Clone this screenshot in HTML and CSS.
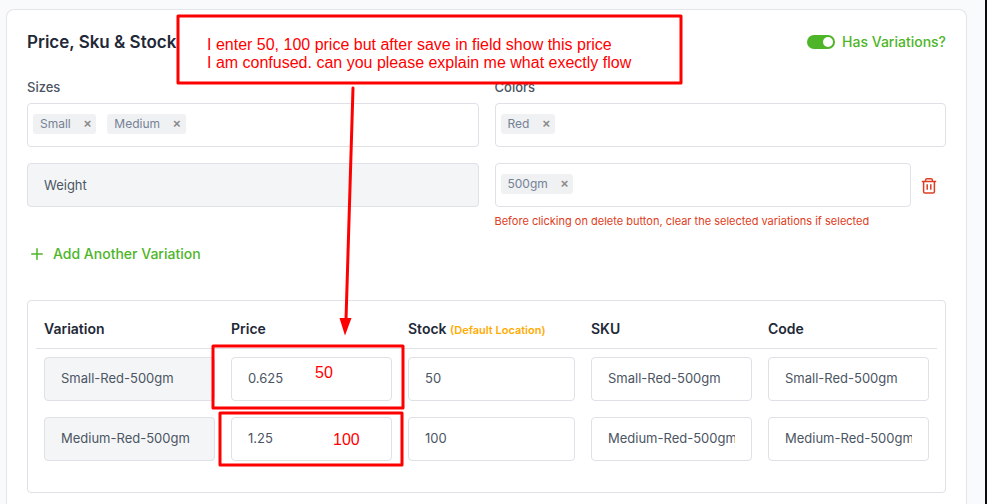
FILE: index.html
```html
<!DOCTYPE html>
<html lang="en">
<head>
    <meta charset="UTF-8">
    <meta name="viewport" content="width=device-width, initial-scale=1.0">
    <title>Price, Sku &amp; Stock</title>
    <link rel="stylesheet" href="styles.css">
</head>
<body>
    <div class="page">
        <main class="card">
            <div class="card-header">
                <h1>Price, Sku &amp; Stock</h1>
                <label class="switch"><input type="checkbox" checked>Has Variations?</label>
            </div>

            <div class="options">
                <div class="field">
                    <label for="sizes">Sizes</label>
                    <div class="tags">
                        <span class="tag">Small<button type="button" aria-label="Remove Small">×</button></span>
                        <span class="tag">Medium<button type="button" aria-label="Remove Medium">×</button></span>
                        <input type="text" id="sizes">
                    </div>
                </div>
                <div class="field">
                    <label for="colors">Colors</label>
                    <div class="tags">
                        <span class="tag">Red<button type="button" aria-label="Remove Red">×</button></span>
                        <input type="text" id="colors">
                    </div>
                </div>
                <div class="field">
                    <input type="text" class="control" value="Weight" aria-label="Variation name" readonly>
                </div>
                <div class="field">
                    <div class="with-delete">
                        <div class="tags">
                            <span class="tag">500gm<button type="button" aria-label="Remove 500gm">×</button></span>
                            <input type="text" aria-label="Weight values">
                        </div>
                        <button type="button" class="delete" aria-label="Delete variation">
                            <svg width="16" height="17" viewBox="0 0 16 17" fill="none" stroke="currentColor">
                                <path d="M.8 4.5h14.400" stroke-width="1.5"/>
                                <path d="M4.500 4.200V3.500Q4.500 1.800 6.200 1.800h3.600q1.700 0 1.700 1.700v.7" stroke-width="1.4"/>
                                <path d="M2.600 4.500v10.200q0 1.400 1.400 1.400h8q1.400 0 1.400-1.400V4.500" stroke-width="1.5"/>
                                <path d="M6.200 7.300v5.400M9.800 7.300v5.400" stroke-width="1.5"/>
                            </svg>
                        </button>
                    </div>
                    <p class="warning">Before clicking on delete button, clear the selected variations if selected</p>
                </div>
            </div>

            <button type="button" class="add">
                <svg width="12" height="13" viewBox="0 0 12 13" stroke="currentColor" stroke-width="1.5" stroke-linecap="round">
                    <path d="M6 1.700v10.600M.7 7h10.600"/>
                </svg>
                Add Another Variation
            </button>

            <div class="panel">
                <table>
                    <colgroup>
                        <col class="col-variation">
                        <col class="col-price">
                        <col class="col-stock">
                        <col class="col-sku">
                        <col class="col-code">
                    </colgroup>
                    <thead>
                        <tr>
                            <th>Variation</th>
                            <th>Price</th>
                            <th>Stock <small>(Default Location)</small></th>
                            <th>SKU</th>
                            <th>Code</th>
                        </tr>
                    </thead>
                    <tbody>
                        <tr>
                            <td><input type="text" class="control" value="Small-Red-500gm" aria-label="Variation" readonly></td>
                            <td><input type="text" class="control" value="0.625" aria-label="Price"></td>
                            <td><input type="text" class="control" value="50" aria-label="Stock"></td>
                            <td><input type="text" class="control" value="Small-Red-500gm" aria-label="SKU"></td>
                            <td><input type="text" class="control" value="Small-Red-500gm" aria-label="Code"></td>
                        </tr>
                        <tr>
                            <td><input type="text" class="control" value="Medium-Red-500gm" aria-label="Variation" readonly></td>
                            <td><input type="text" class="control" value="1.25" aria-label="Price"></td>
                            <td><input type="text" class="control" value="100" aria-label="Stock"></td>
                            <td><input type="text" class="control" value="Medium-Red-500gm" aria-label="SKU"></td>
                            <td><input type="text" class="control" value="Medium-Red-500gm" aria-label="Code"></td>
                        </tr>
                    </tbody>
                </table>
            </div>
        </main>

        <!-- red markup drawn over the form -->
        <div class="notes">
            <svg class="marks" width="700" height="480" viewBox="0 0 700 480" fill="none" stroke="#f00" stroke-width="3" stroke-linejoin="round">
                <rect x="178" y="16" width="503" height="67" fill="#fff"/>
                <rect x="213" y="346" width="190" height="62"/>
                <rect x="220" y="413" width="182" height="52"/>
                <path d="M353 88 346 320" stroke-linecap="round"/>
                <path d="M339.5 318h12L345 335.500z" fill="#f00" stroke="none"/>
            </svg>
            <p class="note note-question">I enter 50, 100 price but after save in field show this price<br>I am confused. can you please explain me what exectly flow</p>
            <p class="note note-first">50</p>
            <p class="note note-second">100</p>
        </div>
    </div>
</body>
</html>
```
FILE: styles.css
```css
*{
    margin: 0;
    padding: 0;
    box-sizing: border-box;
}
body{
    font-family: Inter, "Liberation Sans", sans-serif;
    font-size: 13px;
    color: #4b5563;
    background-color: #f9fafc;
}
button, input{
    font: inherit;
    color: inherit;
    border: none;
    background: none;
}
button{
    cursor: pointer;
}
.page{
    position: relative;
    display: flex;
    min-height: 100vh;
    padding: 9px 18px 0 6px;
    border-right: 2px solid #0b0c0e;
}
.card{
    flex: 1;
    padding: 20px 20px 10px;
    background-color: #fff;
    border: 1px solid #e3e5e8;
    border-bottom: none;
    border-radius: 8px 8px 0 0;
}
.card-header{
    display: flex;
    justify-content: space-between;
    align-items: center;
    height: 23px;
    margin-bottom: 25px;
}
.card-header h1{
    font-size: 17px;
    font-weight: 600;
    color: #1f2937;
}
.switch{
    display: flex;
    align-items: center;
    gap: 7px;
    font-size: 14px;
    font-weight: 500;
    color: #4eb529;
}
.switch input{
    appearance: none;
    width: 28px;
    height: 14px;
    padding: 2px;
    border-radius: 7px;
    background-color: #4eb529;
}
.switch input::before{
    content: "";
    display: block;
    width: 10px;
    height: 10px;
    border-radius: 50%;
    background-color: #fff;
}
.switch input:checked::before{
    margin-left: auto;
}
.options{
    display: grid;
    grid-template-columns: 1fr 1fr;
    gap: 16px;
}
.field label{
    display: block;
    height: 25px;
    line-height: 18px;
    font-weight: 500;
}
.tags{
    display: flex;
    align-items: flex-start;
    flex: 1;
    gap: 11px;
    height: 44px;
    padding: 10px 5px;
    border: 1px solid #dfe1e6;
    border-radius: 4px;
}
.tags input{
    flex: 1;
    min-width: 0;
    outline: none;
}
.tag{
    display: flex;
    align-items: center;
    gap: 13px;
    height: 20px;
    padding: 0 5px 1px 7px;
    font-size: 12px;
    color: #748296;
    background-color: #f0f1f2;
    border-radius: 3px;
}
.tag button{
    font-family: "Liberation Sans", sans-serif;
    font-size: 13px;
    font-weight: bold;
    color: #8a8a8a;
}
.control{
    display: block;
    width: 100%;
    height: 44px;
    padding: 0 16px 1px;
    border: 1px solid #dfe1e6;
    border-radius: 4px;
}
.control:read-only{
    background-color: #f4f5f7;
}
.with-delete{
    display: flex;
    align-items: center;
}
.delete{
    display: flex;
    justify-content: center;
    width: 35px;
    color: #dc3d22;
}
.warning{
    margin-top: 6px;
    font-size: 11px;
    line-height: 16px;
    color: #e03c22;
}
.add{
    display: flex;
    align-items: center;
    gap: 10px;
    height: 24px;
    margin: 12px 0 35px;
    padding-left: 4px;
    font-size: 14px;
    font-weight: 500;
    color: #4eb529;
}
.panel{
    padding: 8px 8px 23px;
    border: 1px solid #dfe1e6;
    border-radius: 4px;
}
table{
    width: 100%;
    table-layout: fixed;
    border-collapse: collapse;
}
.col-variation{
    width: 187px;
}
.col-price, .col-sku, .col-code{
    width: 177px;
}
.col-stock{
    width: 183px;
}
th{
    height: 39px;
    padding: 0 8px;
    font-size: 14px;
    font-weight: 600;
    text-align: left;
    white-space: nowrap;
    color: #1f2937;
    border-bottom: 1px solid #dfe1e6;
}
th small{
    font-size: 11px;
    color: #ffab00;
}
td{
    padding: 8px;
}
.notes{
    position: absolute;
    top: 0;
    left: 0;
    pointer-events: none;
}
.marks{
    display: block;
}
.note{
    position: absolute;
    font-family: "Liberation Sans", sans-serif;
    font-size: 16px;
    line-height: 18px;
    white-space: nowrap;
    color: #f00;
}
.note-question{
    top: 36px;
    left: 207px;
}
.note-first{
    top: 364px;
    left: 315px;
}
.note-second{
    top: 431px;
    left: 333px;
}
```
